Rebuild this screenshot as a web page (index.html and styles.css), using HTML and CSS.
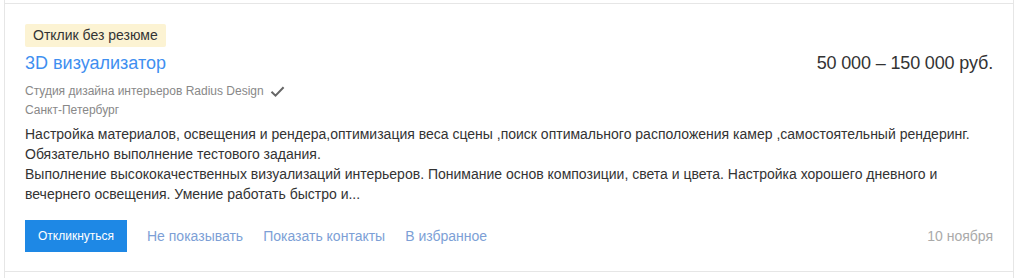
FILE: index.html
```html
<!DOCTYPE html>
<html lang="ru">
<head>
<meta charset="utf-8">
<title>Вакансия</title>
<link rel="stylesheet" href="styles.css">
</head>
<body>
<div class="list">
  <div class="item">
    <div class="badge">Отклик без резюме</div>
    <div class="head">
      <a class="title" href="#">3D визуализатор</a>
      <div class="salary">50 000 – 150 000 руб.</div>
    </div>
    <div class="company">Студия дизайна интерьеров Radius Design
      <svg class="check" width="15" height="13" viewBox="0 0 15 13"><path d="M1.5 6.8 L5.5 10.6 L13.6 2.2" fill="none" stroke="#666" stroke-width="2"/></svg>
    </div>
    <div class="city">Санкт-Петербург</div>
    <div class="desc">Настройка материалов, освещения и рендера,оптимизация веса сцены ,поиск оптимального расположения камер ,самостоятельный рендеринг.<br>Обязательно выполнение тестового задания.<br>Выполнение высококачественных визуализаций интерьеров. Понимание основ композиции, света и цвета. Настройка хорошего дневного и вечернего освещения. Умение работать быстро и...</div>
    <div class="actions">
      <button class="btn">Откликнуться</button>
      <a class="link" href="#">Не показывать</a>
      <a class="link" href="#">Показать контакты</a>
      <a class="link" href="#">В избранное</a>
      <span class="date">10 ноября</span>
    </div>
  </div>
  <div class="item next"></div>
</div>
</body>
</html>
```
FILE: styles.css
```css
html, body {
  margin: 0;
  padding: 0;
  background: #fff;
}
body {
  font-family: "Liberation Sans", Arial, sans-serif;
  color: #333;
  padding-left: 4px;
  width: 1010px;
}
.list {
  border-left: 1px solid #e6e6e6;
  border-right: 1px solid #e6e6e6;
  padding-top: 3px;
}
.item {
  border-top: 1px solid #e6e6e6;
  padding: 20px 20px 19px 20px;
}
.item.next {
  padding: 0;
  height: 10px;
}
.badge {
  display: inline-block;
  background: #fcf3d3;
  color: #333;
  font-size: 14px;
  line-height: 23px;
  height: 23px;
  padding: 0 8px;
  border-radius: 2px;
}
.head {
  display: flex;
  justify-content: space-between;
  align-items: baseline;
  margin-top: 4px;
  line-height: 24px;
}
.title {
  font-size: 18px;
  color: #3f8ff0;
  text-decoration: none;
}
.salary {
  font-size: 18px;
  color: #333;
  letter-spacing: -0.15px;
}
.company {
  margin-top: 7px;
  font-size: 12px;
  line-height: 18px;
  color: #888;
  display: flex;
  align-items: center;
}
.check {
  margin-left: 6px;
}
.city {
  margin-top: 1px;
  font-size: 12px;
  line-height: 18px;
  color: #888;
}
.desc {
  margin-top: 5px;
  font-size: 14px;
  line-height: 20px;
  color: #333;
}
.actions {
  margin-top: 16px;
  display: flex;
  align-items: center;
  height: 32px;
}
.btn {
  background: #1e88e5;
  color: #fff;
  border: 0;
  height: 32px;
  width: 102px;
  padding: 0;
  font-family: "Liberation Sans", Arial, sans-serif;
  font-size: 12px;
  border-radius: 0;
}
.link {
  margin-left: 20px;
  font-size: 14px;
  color: #7d9fd6;
  text-decoration: none;
}
.date {
  margin-left: auto;
  font-size: 14px;
  color: #aaa;
}
```
